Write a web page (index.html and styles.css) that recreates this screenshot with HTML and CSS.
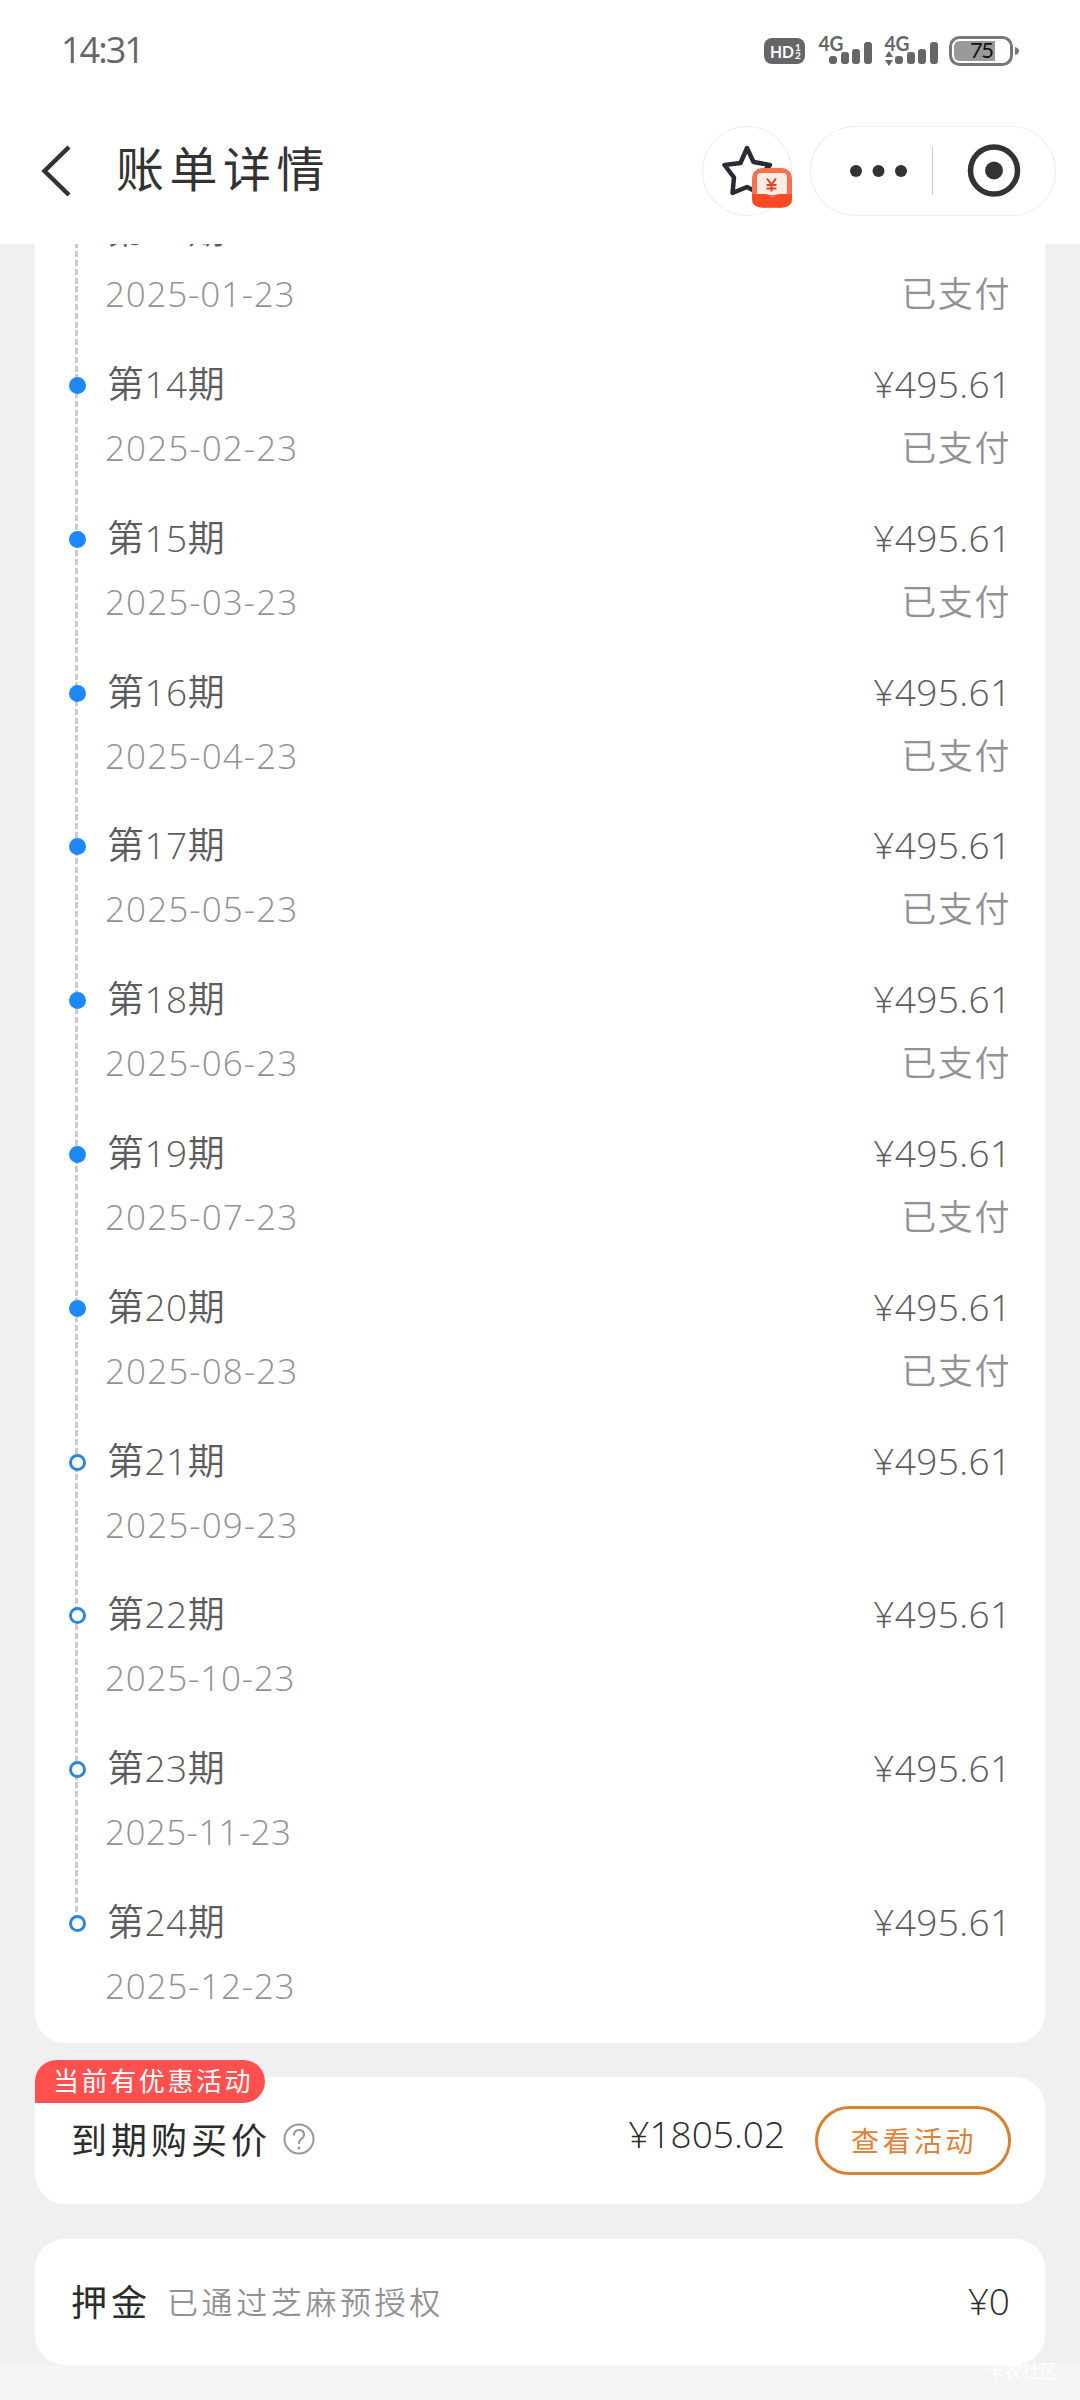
FILE: index.html
```html
<!DOCTYPE html>
<html lang="zh-CN">
<head>
<meta charset="utf-8">
<title>账单详情</title>
<link rel="stylesheet" href="styles.css">
</head>
<body>
<div class="app">
  <header class="header">
    <div class="status">
      <span class="time">14:31</span>
      <svg class="status-icons" width="262" height="44" viewBox="760 29 262 44">
        <rect x="764" y="38" width="41" height="26" rx="8" fill="#666"/>
        <text x="770" y="57.500" font-size="17" font-weight="700" fill="#fff" textLength="24" lengthAdjust="spacingAndGlyphs">HD</text>
        <text x="795" y="51" font-size="10" font-weight="700" fill="#fff">1</text>
        <text x="795" y="59" font-size="10" font-weight="700" fill="#fff">2</text>
        <g fill="#666">
          <text x="818.500" y="50.500" font-size="20" font-weight="700" textLength="25" lengthAdjust="spacingAndGlyphs">4G</text>
          <rect x="829" y="56" width="8" height="8" rx="3"/><rect x="841" y="52" width="8" height="12" rx="3"/>
          <rect x="852" y="49" width="8" height="15" rx="3"/><rect x="864" y="42" width="8" height="22" rx="3"/>
          <text x="884.500" y="50.500" font-size="20" font-weight="700" textLength="25" lengthAdjust="spacingAndGlyphs">4G</text>
          <rect x="895" y="56" width="8" height="8" rx="3"/><rect x="907" y="52" width="8" height="12" rx="3"/>
          <rect x="918" y="49" width="8" height="15" rx="3"/><rect x="930" y="42" width="8" height="22" rx="3"/>
          <path d="M889 51l4 6h-8zM889 66l4-6h-8z"/>
        </g>
        <rect x="950.500" y="37.500" width="61" height="27" rx="9" fill="#fff" stroke="#777" stroke-width="3"/>
        <path d="M960 41h35v20h-35q-6 0-6-6v-8q0-6 6-6z" fill="#999"/>
        <path d="M1015 47q4 1 4 4t-4 4z" fill="#777"/>
        <text x="970" y="58" font-size="22" font-weight="400" fill="#111" textLength="24">75</text>
      </svg>
    </div>
    <div class="nav">
      <svg class="back" width="32" height="54" viewBox="0 0 32 54"><path d="M30 3L5.500 27 30 51" fill="none" stroke="#333" stroke-width="4.500"/></svg>
      <h1 class="title">账单详情</h1>
      <div class="fav">
        <svg width="90" height="90" viewBox="702 126 90 90">
          <path d="M747 148l6.500 14 16.500 3-11.500 12 2 17L747 187l-14.500 6 1.500-15.500L724.500 165l16-2z" fill="none" stroke="#292d33" stroke-width="4.500" stroke-linejoin="round"/>
          <rect x="752" y="168" width="40" height="40" rx="10" fill="#f8704c"/>
          <path d="M757 177q0-4 4-4h22q4 0 4 4v18h-30z" fill="#fdebe6"/>
          <path d="M752 194h14q3 0 5 3 1 1 3 0 2-3 5-3h13v5q0 8-9 8h-22q-9 0-9-8z" fill="#fb4b24"/>
          <path d="M767 178.500l4.500 6 4.500-6M771.500 184.500v7M766.500 185h10M766.500 188.500h10" fill="none" stroke="#d54427" stroke-width="2"/>
        </svg>
      </div>
      <div class="capsule">
        <svg width="246" height="90" viewBox="810 126 246 90">
          <g fill="#333"><circle cx="856" cy="171" r="6"/><circle cx="878.500" cy="171" r="6"/><circle cx="901" cy="171" r="6"/><circle cx="994" cy="170.500" r="9"/></g>
          <path d="M932.500 147v48" stroke="#ccc" stroke-width="1"/>
          <circle cx="994" cy="170.500" r="23.500" fill="none" stroke="#333" stroke-width="5.500"/>
        </svg>
      </div>
    </div>
  </header>

  <main class="content">
    <section class="card bills">
      <ol class="list">
        <li class="row paid"><span class="name">第13期</span><span class="price">¥495.61</span><span class="date one">2025-01-23</span><span class="state">已支付</span></li>
        <li class="row paid"><span class="name">第14期</span><span class="price">¥495.61</span><span class="date">2025-02-23</span><span class="state">已支付</span></li>
        <li class="row paid"><span class="name">第15期</span><span class="price">¥495.61</span><span class="date">2025-03-23</span><span class="state">已支付</span></li>
        <li class="row paid"><span class="name">第16期</span><span class="price">¥495.61</span><span class="date">2025-04-23</span><span class="state">已支付</span></li>
        <li class="row paid"><span class="name">第17期</span><span class="price">¥495.61</span><span class="date">2025-05-23</span><span class="state">已支付</span></li>
        <li class="row paid"><span class="name">第18期</span><span class="price">¥495.61</span><span class="date">2025-06-23</span><span class="state">已支付</span></li>
        <li class="row paid"><span class="name">第19期</span><span class="price">¥495.61</span><span class="date">2025-07-23</span><span class="state">已支付</span></li>
        <li class="row paid"><span class="name">第20期</span><span class="price">¥495.61</span><span class="date">2025-08-23</span><span class="state">已支付</span></li>
        <li class="row"><span class="name">第21期</span><span class="price">¥495.61</span><span class="date">2025-09-23</span></li>
        <li class="row"><span class="name">第22期</span><span class="price">¥495.61</span><span class="date one">2025-10-23</span></li>
        <li class="row"><span class="name">第23期</span><span class="price">¥495.61</span><span class="date two">2025-11-23</span></li>
        <li class="row"><span class="name">第24期</span><span class="price">¥495.61</span><span class="date one">2025-12-23</span></li>
      </ol>
    </section>

    <section class="card buyout">
      <span class="tag">当前有优惠活动</span>
      <span class="label">到期购买价</span>
      <svg class="help" width="32" height="32" viewBox="0 0 32 32"><circle cx="16" cy="16" r="14.500" fill="none" stroke="#999" stroke-width="2"/><path d="M11 12.500q0-5.500 5-5.500t5 4.500q0 2.500-3 4.500-2 1.500-2 5" fill="none" stroke="#999" stroke-width="2"/><circle cx="16" cy="25" r="1.500" fill="#999"/></svg>
      <span class="amount">¥1805.02</span>
      <button class="promo">查看活动</button>
    </section>

    <section class="card deposit">
      <span class="label">押金</span>
      <span class="note">已通过芝麻预授权</span>
      <span class="amount">¥0</span>
    </section>
  </main>
  <footer class="footer"><span class="mark">卡农社区</span></footer>
</div>
</body>
</html>
```
FILE: styles.css
```css
*, *::before { box-sizing: border-box; }
body { margin: 0; background: #f0f0f0; font-family: "Open Sans", "Noto Sans CJK SC", sans-serif; font-weight: 350; }
.app { width: 1080px; height: 2400px; display: flex; flex-direction: column; overflow: hidden; }
.header { height: 244px; background: #fff; flex: none; }
.status { height: 102px; padding: 0 58px 0 61px; display: flex; justify-content: space-between; align-items: center; }
.time { font-size: 36px; line-height: 40px; font-weight: 400; color: #666; letter-spacing: -2px; padding-bottom: 2px; }
.status-icons { font-family: Lato, sans-serif; }
.nav { height: 138px; padding: 0 24px 0 39px; display: flex; align-items: center; }
.back { flex: none; }
.title { margin: 0 auto 4px 45px; font-size: 48px; font-weight: 400; line-height: 60px; letter-spacing: 5.5px; color: #333; }
.fav { width: 90px; height: 90px; border-radius: 45px; box-shadow: inset 0 0 0 1px #eee; }
.capsule { width: 246px; height: 90px; margin-left: 18px; border-radius: 45px; box-shadow: inset 0 0 0 1px #eee; }
.fav svg, .capsule svg { display: block; }

.content { flex: 1; padding: 0 35px; display: flex; flex-direction: column; }
.card { background: #fff; border-radius: 30px; flex: none; }
.bills { height: 1799px; border-radius: 0 0 30px 30px; padding-bottom: 25px; display: flex; flex-direction: column; justify-content: flex-end; overflow: hidden; }
.list { margin: 0; padding: 0; list-style: none; position: relative; }
.list::before { content: ""; position: absolute; left: 40px; top: 0; bottom: 104px; width: 3px; background: repeating-linear-gradient(to bottom, #ccc 0 6px, transparent 6px 8.8px); }
.row { height: 153.8px; padding: 25.8px 35px 0 70px; display: grid; grid-template-columns: 1fr auto; grid-template-rows: 64px 64px; align-items: center; position: relative; }
.row::before { content: ""; position: absolute; left: 34px; top: 50.8px; width: 17px; height: 17px; border: 3px solid #2f84de; border-radius: 50%; background: #fff; }
.row.paid::before { background: #1e88fa; border-color: #1e88fa; }
.name, .price { font-size: 37px; line-height: 64px; color: #5c5c5c; }
.name { padding-left: 2px; letter-spacing: 0.5px; }
.price { text-align: right; letter-spacing: 0.4px; margin-right: -1.5px; }
.date, .state { font-size: 35px; line-height: 64px; color: #929292; }
.date { letter-spacing: 1.1px; }
.date.one { letter-spacing: 0.8px; }
.date.two { letter-spacing: 0.4px; }
.state { text-align: right; letter-spacing: 1.6px; margin-right: -1px; }

.buyout { height: 127px; margin-top: 34px; padding: 0 34px 0 36px; display: flex; align-items: center; position: relative; }
.tag { position: absolute; left: 0; top: -17px; width: 230px; height: 43px; border-radius: 22px 22px 22px 0; background: #ff5050; color: #fff; font-size: 26px; font-weight: 400; line-height: 42px; letter-spacing: 2.6px; padding-left: 18px; white-space: nowrap; }
.label { font-size: 36px; font-weight: 400; letter-spacing: 4px; color: #2c2c2c; white-space: nowrap; }
.buyout .label, .help { margin-bottom: 4px; }
.help { margin-left: 12px; }
.amount { margin-left: auto; font-size: 37px; color: #2c2c2c; }
.buyout .amount { margin-bottom: 14px; }
.promo { width: 196px; height: 69px; margin-left: 30px; padding: 0 0 2px 2px; border: 3px solid #d9812f; border-radius: 35px; background: #fff; color: #e0813a; font-family: inherit; font-size: 28px; letter-spacing: 3.5px; }
.deposit { height: 126px; margin-top: 35px; padding: 0 35px 3px 36px; display: flex; align-items: center; }
.note { margin-left: 16px; font-size: 31px; letter-spacing: 3.6px; color: #929292; }
.footer { height: 35px; flex: none; background: #f5f5f5; padding-right: 22px; text-align: right; }
.mark { display: block; font-size: 18px; line-height: 12px; color: #fff; }
```
